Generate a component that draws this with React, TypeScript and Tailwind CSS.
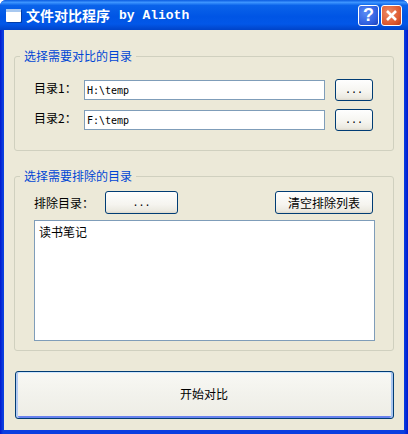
import { ReactNode } from "react";

const cjk = "font-['Noto_Sans_CJK_SC','Liberation_Sans',sans-serif]";
const mono = "font-['DejaVu_Sans_Mono','Noto_Sans_CJK_SC',monospace]";

function XpButton({ children, className, large }: { children: ReactNode; className: string; large?: boolean }) {
  const bg = large
    ? "bg-[linear-gradient(180deg,#f8f8f4_0%,#f2f2ec_50%,#eeede5_100%)]"
    : "bg-[linear-gradient(180deg,#fefefe_0%,#f5f4ef_60%,#ebe9e0_90%,#dcd8cc_100%)]";
  return (
    <button
      className={`flex items-center justify-center rounded-[3px] border border-[#003c74] text-xs text-black ${bg} ${className}`}
    >
      {children}
    </button>
  );
}

function Dots() {
  return <span className={`text-[10px] ${mono}`}>...</span>;
}

function DirRow({ label, value }: { label: string; value: string }) {
  return (
    <div className="flex h-[22px] items-center">
      <span className="w-[50px] pb-1 text-xs text-black">{label}</span>
      <div className={`flex h-[20px] w-[241px] items-center border border-[#7f9db9] bg-white pl-[2px] text-[10px] text-black ${mono}`}>
        {value}
      </div>
      <XpButton className="ml-[10px] h-[22px] w-[38px]">
        <Dots />
      </XpButton>
    </div>
  );
}

function Group({ title, className, children }: { title: string; className: string; children: ReactNode }) {
  return (
    <div className={`relative rounded-[3px] border border-[#d0d0bf] ${className}`}>
      <span className="absolute left-[5px] top-[-9px] bg-[#ece9d8] px-[4px] text-xs leading-[16px] text-[#0046d5]">
        {title}
      </span>
      {children}
    </div>
  );
}

export default function App() {
  return (
    <div
      className={`flex h-[434px] w-[408px] flex-col overflow-hidden rounded-t-[6px] bg-[linear-gradient(90deg,#0019cf_0,#0a3fe0_3px,#0a3fe0_404px,#0019cf_100%)] ${cjk}`}
    >
      {/* Title bar */}
      <div className="flex h-[30px] shrink-0 items-center bg-[linear-gradient(180deg,#0a5be0_0%,#3d95ff_8%,#0a63ea_18%,#0055e5_55%,#0257e8_80%,#0043c8_100%)] pl-[6px] pr-[6px]">
        <div className="h-[13px] w-[15px] rounded-[1px] bg-white shadow-[1px_1px_0_#003ca8]">
          <div className="h-[3px] bg-[#a8c8f0]" />
        </div>
        <span className="ml-[5px] pt-px text-[14px] font-bold text-white">文件对比程序</span>
        <span className="ml-[9px] pt-px font-['Liberation_Mono',monospace] text-[13px] font-bold text-white">by Alioth</span>
        <div className="ml-auto flex gap-[2px]">
          <div className="flex h-[21px] w-[21px] items-center justify-center rounded-[3px] border border-white bg-[radial-gradient(circle_at_35%_35%,#5b8cf5_0%,#2f5fe0_65%,#1d3fb8_100%)]">
            <span className="font-['Liberation_Sans',sans-serif] text-[18px] leading-none font-bold text-white">?</span>
          </div>
          <div className="flex h-[21px] w-[21px] items-center justify-center rounded-[3px] border border-white bg-[radial-gradient(circle_at_35%_35%,#ee8a66_0%,#dd5a30_65%,#b8391a_100%)]">
            <svg width="13" height="13" viewBox="0 0 13 13">
              <path d="M2 2 L11 11 M11 2 L2 11" stroke="#fff" strokeWidth="2.6" />
            </svg>
          </div>
        </div>
      </div>

      {/* Client area */}
      <div className="mx-1 mb-1 flex min-h-0 flex-1 flex-col bg-[#ece9d8] pl-[10px] pr-[10px]">
        <Group title="选择需要对比的目录" className="mt-[26px] h-[95px] pl-[19px] pt-[22px]">
          <div className="flex flex-col gap-2">
            <DirRow label="目录1：" value="H:\temp" />
            <DirRow label="目录2：" value="F:\temp" />
          </div>
        </Group>

        <Group title="选择需要排除的目录" className="mt-[25px] h-[175px] pl-[19px] pt-[14px]">
          <div className="flex h-[23px] items-center">
            <span className="w-[71px] text-xs text-black">排除目录：</span>
            <XpButton className="h-[23px] w-[73px]">
              <Dots />
            </XpButton>
            <XpButton className="ml-[97px] h-[23px] w-[98px]">清空排除列表</XpButton>
          </div>
          <div className="mt-[6px] h-[121px] w-[341px] border border-[#7f9db9] bg-white pl-1 pt-[3px] text-xs text-black">
            读书笔记
          </div>
        </Group>

        <XpButton
          large
          className="ml-px mt-5 h-[48px] w-[379px] pb-[2px] pr-px shadow-[inset_2px_0_0_#b4cbf2,inset_-2px_0_0_#a9c6f0,inset_0_1px_0_#cee7ff,inset_0_-2px_0_#6982ee]"
        >
          开始对比
        </XpButton>
      </div>
    </div>
  );
}
